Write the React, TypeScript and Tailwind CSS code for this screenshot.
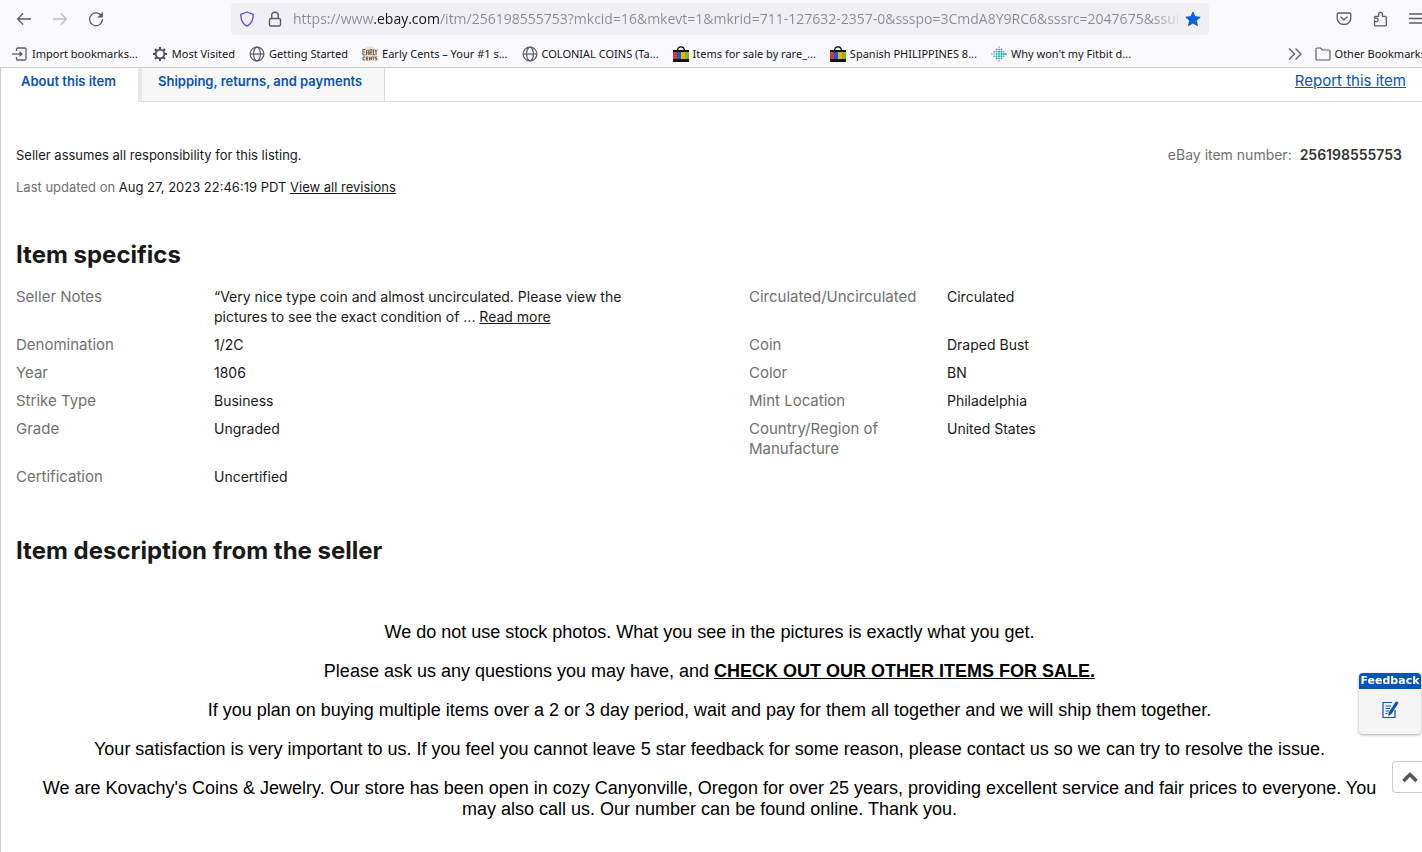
import React from 'react';

const bookmarks = [
  { name: 'Import bookmarks...', icon: ImportIcon },
  { name: 'Most Visited', icon: GearIcon },
  { name: 'Getting Started', icon: GlobeIcon },
  { name: 'Early Cents – Your #1 s...', icon: EarlyCentsIcon },
  { name: 'COLONIAL COINS (Ta...', icon: GlobeIcon },
  { name: 'Items for sale by rare_...', icon: BagIcon },
  { name: 'Spanish PHILIPPINES 8...', icon: BagIcon },
  { name: "Why won't my Fitbit d...", icon: FitbitIcon },
];

const specsLeft = [
  { label: 'Denomination', value: '1/2C' },
  { label: 'Year', value: '1806' },
  { label: 'Strike Type', value: 'Business' },
  { label: 'Grade', value: 'Ungraded' },
];

const specsRight = [
  { label: 'Coin', value: 'Draped Bust' },
  { label: 'Color', value: 'BN' },
  { label: 'Mint Location', value: 'Philadelphia' },
  { label: 'Country/Region of Manufacture', value: 'United States' },
];

function ImportIcon() {
  return (
    <svg className="h-4 w-4 shrink-0" viewBox="0 0 16 16" fill="none" stroke="#5b5b66" strokeWidth="1.3">
      <path d="M4.5 5V3.2C4.5 2.5 5 2 5.7 2h7.1c.7 0 1.2.5 1.2 1.2v9.6c0 .7-.5 1.2-1.2 1.2H5.7c-.7 0-1.2-.5-1.2-1.2V11" />
      <path d="M0 8h9" />
      <path d="M7.5 5l3.5 3-3.5 3z" fill="#5b5b66" stroke="none" />
    </svg>
  );
}

function GearIcon() {
  return (
    <svg className="h-4 w-4 shrink-0" viewBox="0 0 16 16" fill="none" stroke="#4a4a55">
      <circle cx="8" cy="8" r="4.3" strokeWidth="1.7" />
      <path
        strokeWidth="2"
        d="M8 1v2.5M8 12.5V15M1 8h2.5M12.5 8H15M3 3l1.8 1.8M11.2 11.2L13 13M3 13l1.8-1.8M11.2 4.8L13 3"
      />
    </svg>
  );
}

function GlobeIcon() {
  return (
    <svg className="h-4 w-4 shrink-0" viewBox="0 0 16 16" fill="none" stroke="#5b5b66" strokeWidth="1.2">
      <circle cx="8" cy="8" r="6.9" />
      <ellipse cx="8" cy="8" rx="3.4" ry="6.9" />
      <path d="M1 8h14" />
    </svg>
  );
}

function EarlyCentsIcon() {
  return (
    <svg className="h-4 w-4 shrink-0" viewBox="0 0 16 16">
      <circle cx="8" cy="8" r="7.5" fill="#e9e2dc" />
      <g fill="none" stroke="#7a5d49" strokeWidth="1">
        <path d="M3.5 3.5H.8v5.3h2.7M.8 6h2.2M4.5 9V4.2h2.2V9M4.5 6.8h2.2M8 9V3.6h2v2.6H8l2.2 2.8M11.5 3.3V8.8h1.6M13 3.4l1 2.4 1.4-2.4M14 5.8V9" />
        <path d="M3.2 11H1v3h2.2M6.3 11H4.4v3h1.9M4.4 12.5H6M7.5 14.3v-3.4l2 3v-3.2M10.2 11h2.4M11.4 11v3.2M15 11h-1.6v1.5H15V14h-1.8" />
      </g>
    </svg>
  );
}

function BagIcon() {
  return (
    <svg className="h-4 w-4 shrink-0" viewBox="0 0 16 16">
      <path d="M4.5 5C4.5 2 6 .8 8 .8S11.5 2 11.5 5" fill="none" stroke="#000" strokeWidth="1.2" />
      <path d="M0 4h16v12H0z" fill="#111" />
      <path d="M0 6h4v7H0z" fill="#e53238" />
      <path d="M4 6h4v7H4z" fill="#0064d2" />
      <path d="M8 6h4v7H8z" fill="#f5af02" />
      <path d="M12 6h4v7h-4z" fill="#86b817" />
    </svg>
  );
}

const dots = [
  [8, 1, 0.7], [5.5, 3.4, 0.8], [8, 3.4, 0.9], [10.5, 3.4, 0.8],
  [3.2, 5.7, 0.8], [5.5, 5.7, 0.9], [8, 5.7, 1], [10.5, 5.7, 1], [12.8, 5.7, 0.8],
  [0.9, 8, 0.7], [3.2, 8, 0.8], [5.5, 8, 0.9], [8, 8, 1], [10.5, 8, 1.1], [12.8, 8, 1.1], [15, 8, 0.9],
  [3.2, 10.3, 0.8], [5.5, 10.3, 0.9], [8, 10.3, 1], [10.5, 10.3, 1], [12.8, 10.3, 0.8],
  [5.5, 12.6, 0.8], [8, 12.6, 0.9], [10.5, 12.6, 0.8], [8, 15, 0.7],
];

function FitbitIcon() {
  return (
    <svg className="h-4 w-4 shrink-0" viewBox="0 0 16 16" fill="#14a9b5">
      {dots.map(([x, y, r]) => (
        <circle key={`${x}-${y}`} cx={x} cy={y} r={r} />
      ))}
    </svg>
  );
}

function ToolButton({ label, children }: { label: string; children: React.ReactNode }) {
  return (
    <button type="button" aria-label={label} className="flex h-8 w-9 shrink-0 items-center justify-center">
      <svg
        className="h-4 w-4"
        viewBox="0 0 16 16"
        fill="none"
        stroke="#5b5b66"
        strokeWidth="1.3"
        strokeLinecap="round"
        strokeLinejoin="round"
      >
        {children}
      </svg>
    </button>
  );
}

function BrowserBar() {
  return (
    <header className="overflow-hidden border-b border-[#cccccc] bg-[#f9f9fb] font-['Noto_Sans','Open_Sans',sans-serif] text-[#15141a]">
      <div className="flex items-center pt-[3px] pl-[6px]">
        <ToolButton label="Back">
          <path d="M14.6 8H1.6M6.8 2.8L1.6 8l5.2 5.2" />
        </ToolButton>
        <ToolButton label="Forward">
          <path d="M1.4 8h13M9.2 2.8L14.4 8l-5.2 5.2" stroke="#bcbcc2" />
        </ToolButton>
        <ToolButton label="Reload">
          <path d="M13.6 5.2A6.4 6.4 0 1 0 14.4 8.6" />
          <path d="M14.6 1.6v4.6H10z" fill="#5b5b66" strokeWidth="0.6" />
        </ToolButton>

        <div className="mx-[117px] flex h-8 min-w-0 flex-1 items-center rounded bg-[#f0f0f4] px-2">
          <svg className="h-4 w-4 shrink-0" viewBox="0 0 16 16" fill="none" stroke="#5a4fd0" strokeWidth="1.3">
            <path d="M8 1l6.2 2.3c.2 5.2-1.4 9.4-6.2 11.9C3.2 12.7 1.6 8.5 1.8 3.3z" strokeLinejoin="round" />
          </svg>
          <svg className="ml-3 h-4 w-4 shrink-0" viewBox="0 0 16 16" fill="none" stroke="#5b5b66" strokeWidth="1.4">
            <rect x="2.5" y="7.5" width="11" height="7.5" rx="1.5" />
            <path d="M4.7 7.5V4.5a3.3 3.3 0 0 1 6.6 0v3" />
          </svg>
          {/* domain is darker than the rest, the tail fades out */}
          <input
            type="text"
            aria-label="Address"
            readOnly
            value="https://www.ebay.com/itm/256198555753?mkcid=16&mkevt=1&mkrid=711-127632-2357-0&ssspo=3CmdA8Y9RC6&sssrc=2047675&ssuid="
            className="ml-[10px] min-w-0 flex-1 bg-[linear-gradient(to_right,#8a8a92_80px,#15141a_80px,#15141a_146px,#8a8a92_146px,#8a8a92_860px,transparent_890px)] bg-clip-text font-['Open_Sans','Noto_Sans',sans-serif] text-sm text-transparent outline-none"
          />
          <button type="button" aria-label="Edit this bookmark" className="flex h-8 w-4 shrink-0 items-center">
            <svg className="h-4 w-4" viewBox="0 0 16 16" fill="#0a60df" stroke="#0a60df" strokeLinejoin="round">
              <path d="M8 1l2.1 4.7 5.1.5-3.9 3.4 1.2 5L8 12l-4.5 2.6 1.2-5L.8 6.2l5.1-.5z" />
            </svg>
          </button>
        </div>

        <div className="-mr-3 flex shrink-0">
          <ToolButton label="Save to Pocket">
            <path d="M2.6 2h10.8c.8 0 1.4.6 1.4 1.4v3.8a6.8 6.3 0 0 1-13.6 0V3.4C1.2 2.6 1.8 2 2.6 2z" />
            <path d="M4.9 6L8 9l3.1-3" />
          </ToolButton>
          <ToolButton label="Extensions">
            <path d="M2.5 9.2V14c0 .6.3.9.9.9h10c.6 0 .9-.3.9-.9V6.2c0-.6-.3-.9-.9-.9h-3V3.2a1.9 1.9 0 0 0-3.8 0v2.1H3.4c-.6 0-.9.3-.9.9v.9h1.9a1.5 1.5 0 0 1 0 3.5H2.5" />
          </ToolButton>
          <ToolButton label="Open application menu">
            <path d="M1.5 3h13M1.5 7.5h13M1.5 12h13" />
          </ToolButton>
        </div>
      </div>

      <nav aria-label="Bookmarks" className="flex h-8 items-center pt-1.5 pl-3 text-[11px] leading-4 whitespace-nowrap">
        <ul className="flex flex-1 gap-[14px]">
          {bookmarks.map((item) => (
            <li key={item.name}>
              <a href="#" className="flex items-center gap-1">
                <item.icon />
                {item.name}
              </a>
            </li>
          ))}
        </ul>
        <button type="button" aria-label="Show more bookmarks" className="shrink-0">
          <svg className="h-4 w-4" viewBox="0 0 16 16" fill="none" stroke="#5b5b66" strokeWidth="1.3">
            <path d="M2 2.5L7.5 8 2 13.5M8.5 2.5L14 8l-5.5 5.5" />
          </svg>
        </button>
        <a href="#" className="-mr-1 ml-3 flex shrink-0 items-center gap-1">
          <svg className="h-4 w-4" viewBox="0 0 16 16" fill="none" stroke="#5b5b66" strokeWidth="1.2">
            <path d="M1 3.2C1 2.5 1.5 2 2.2 2h3.3l2 2h6.3c.7 0 1.2.5 1.2 1.2v7.6c0 .7-.5 1.2-1.2 1.2H2.2C1.5 14 1 13.5 1 12.8z" />
          </svg>
          Other Bookmarks
        </a>
      </nav>
    </header>
  );
}

function Spec({ label, children }: { label: string; children: React.ReactNode }) {
  return (
    <div className="flex">
      <dt className="w-[198px] shrink-0 pr-6 text-[15px] text-[#707070]">{label}</dt>
      <dd className="min-w-0 flex-1 pr-6">{children}</dd>
    </div>
  );
}

export default function App(): React.JSX.Element {
  return (
    <div className="flex min-h-screen flex-col bg-white">
      <BrowserBar />

      <main className="flex-1 border-l border-[#cccccc] font-['Inter',sans-serif] text-sm leading-5 text-[#191919]">
        <div className="flex h-[34px]">
          <div role="tablist" className="flex text-[13px] font-semibold text-[#0654ba]">
            <button type="button" role="tab" aria-selected="true" className="flex pt-[3px] pr-[22px] pl-5">
              About this item
            </button>
            <button
              type="button"
              role="tab"
              aria-selected="false"
              className="flex border-r border-b border-l-4 border-[#dddddd] border-l-[#e8e8e8] bg-[#f7f7f7] pt-[3px] pr-[22px] pl-4"
            >
              Shipping, returns, and payments
            </button>
          </div>
          <div className="flex flex-1 justify-end border-b border-[#dddddd] pt-[3px] pr-4">
            <a href="#" className="text-[15px] text-[#0654ba] underline">
              Report this item
            </a>
          </div>
        </div>

        <div className="pt-[43px] pl-[15px]">
          <div className="flex justify-between pr-5 text-[13px]">
            <p>Seller assumes all responsibility for this listing.</p>
            <p className="text-sm text-[#707070]">
              eBay item number: <span className="ml-1 font-semibold text-[#333333]">256198555753</span>
            </p>
          </div>
          <p className="mt-3 text-[13px] text-[#707070]">
            Last updated on <span className="text-[#191919]">Aug 27, 2023 22:46:19 PDT</span>{' '}
            <a href="#" className="text-[#191919] underline">
              View all revisions
            </a>
          </p>

          <h2 className="mt-[42px] text-2xl font-bold">Item specifics</h2>
          <dl className="mt-4 grid grid-cols-2 gap-x-[60px] gap-y-2">
            <Spec label="Seller Notes">
              “Very nice type coin and almost uncirculated. Please view the pictures to see the exact condition of ...{' '}
              <a href="#" className="underline">
                Read more
              </a>
            </Spec>
            <Spec label="Circulated/Uncirculated">Circulated</Spec>
            {specsLeft.map((spec, i) => (
              <React.Fragment key={spec.label}>
                <Spec label={spec.label}>{spec.value}</Spec>
                <Spec label={specsRight[i].label}>{specsRight[i].value}</Spec>
              </React.Fragment>
            ))}
            <Spec label="Certification">Uncertified</Spec>
          </dl>

          <h2 className="mt-12 text-2xl font-bold">Item description from the seller</h2>
        </div>

        <div className="flex flex-col gap-[18px] pt-[55px] pr-9 pb-8 pl-8 text-center font-['Liberation_Sans',Arial,sans-serif] text-lg leading-[21px] text-black">
          <p>We do not use stock photos. What you see in the pictures is exactly what you get.</p>
          <p>
            Please ask us any questions you may have, and{' '}
            <a href="#" className="font-bold underline">
              CHECK OUT OUR OTHER ITEMS FOR SALE.
            </a>
          </p>
          <p>
            If you plan on buying multiple items over a 2 or 3 day period, wait and pay for them all together and we
            will ship them together.
          </p>
          <p>
            Your satisfaction is very important to us. If you feel you cannot leave 5 star feedback for some reason,
            please contact us so we can try to resolve the issue.
          </p>
          <p>
            We are Kovachy&apos;s Coins &amp; Jewelry. Our store has been open in cozy Canyonville, Oregon for over 25
            years, providing excellent service and fair prices to everyone. You may also call us. Our number can be
            found online. Thank you.
          </p>
        </div>
      </main>

      <button
        type="button"
        className="fixed right-px bottom-[118px] flex w-[62px] flex-col items-stretch rounded-sm bg-[#f5f5f5] shadow-[0_1px_3px_rgba(0,0,0,0.35)]"
      >
        <span className="rounded-t-sm bg-[#0654ba] text-center font-['DejaVu_Sans',Verdana,sans-serif] text-[11px] leading-4 font-bold text-white">
          Feedback
        </span>
        <span className="flex h-[45px] items-center justify-center pb-1">
          <svg className="h-5 w-5" viewBox="0 0 20 20" fill="none" stroke="#0654ba" strokeWidth="1.2">
            <path d="M12 2.5H3v15h12V10" />
            <path d="M5.5 6h5.5M5.5 8.5h4.5M5.5 11h3.5M5.5 13.5h2" />
            <path d="M16 1.2l2.6 1.6-7.1 11.2-3.3 2.2.6-4z" fill="#0654ba" stroke="none" />
          </svg>
        </span>
      </button>

      <button
        type="button"
        aria-label="Back to top"
        className="fixed right-0 bottom-[59px] flex h-8 w-[30px] items-center justify-center rounded-l-sm border border-r-0 border-[#cccccc] bg-white pl-1"
      >
        <svg className="h-4 w-4" viewBox="0 0 16 16" fill="none" stroke="#555555" strokeWidth="3.5">
          <path d="M1.5 12L8 5.5l6.5 6.5" />
        </svg>
      </button>
    </div>
  );
}
